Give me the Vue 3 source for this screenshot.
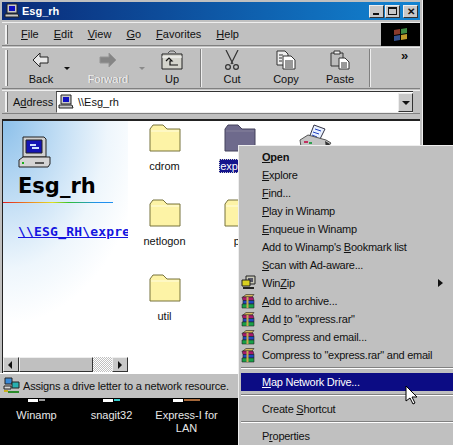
<script setup>
const menus = [['F','ile'],['E','dit'],['V','iew'],['G','o'],['F','avorites'],['H','elp']]
const folders = [
  { a: 'cdrom' }, { a: 'express', cls: 'sel' }, { a: '', printer: true },
  { a: 'netlogon' }, { a: 'pc' }, { a: '', blank: true },
  { a: 'util' }
]
const items = [
  { pre: '', key: 'O', post: 'pen', bold: true },
  { pre: '', key: 'E', post: 'xplore' },
  { pre: '', key: 'F', post: 'ind...' },
  { pre: '', key: 'P', post: 'lay in Winamp' },
  { pre: '', key: 'E', post: 'nqueue in Winamp' },
  { pre: "Add to Winamp's ", key: 'B', post: 'ookmark list' },
  { pre: '', key: 'S', post: 'can with Ad-aware...' },
  { pre: 'Win', key: 'Z', post: 'ip', icon: 'zip', arrow: true },
  { pre: '', key: 'A', post: 'dd to archive...', icon: 'rar' },
  { pre: 'Add ', key: 't', post: 'o "express.rar"', icon: 'rar' },
  { pre: 'Compress and email...', key: '', post: '', icon: 'rar' },
  { pre: 'Compress to "express.rar" and email', key: '', post: '', icon: 'rar' },
  { sep: true },
  { pre: '', key: 'M', post: 'ap Network Drive...', active: true },
  { sep: true },
  { pre: 'Create ', key: 'S', post: 'hortcut' },
  { sep: true },
  { pre: 'P', key: 'r', post: 'operties' }
]
const desktop = [
  { label: 'Winamp', tint: '#9a9a9a' },
  { label: 'snagit32', tint: '#35c9c9' },
  { label: 'Express-I for LAN', tint: '#a5683a' }
]
</script>

<template>
  <div class="screen">
    <div class="window">
      <header class="title">
        <svg class="title-icon" width="16" height="16" viewBox="0 0 16 16"><path d="M3 1h10v9H3z" fill="#c8c8c8" stroke="#222"/><path d="M5 3h6v5H5z" fill="#1010c0"/><path d="M1 11h13l1 3H1z" fill="#c8c8c8" stroke="#222"/></svg>
        <span class="title-text">Esg_rh</span>
        <div class="controls">
          <span class="ctl"><i class="min"></i></span>
          <span class="ctl"><i class="max"></i></span>
          <span class="ctl close">✕</span>
        </div>
      </header>

      <div class="band menu-band">
        <span class="grip"></span>
        <nav class="menus">
          <span v-for="m in menus" :key="m[1]" class="menu-name"><u>{{ m[0] }}</u>{{ m[1] }}</span>
        </nav>
        <div class="flag">
          <svg width="16" height="15" viewBox="0 0 16 15">
            <path d="M1 3l6-1v5l-6 1z" fill="#8a3a2c"/><path d="M8 2l6-1v5l-6 1z" fill="#3f8a44"/>
            <path d="M1 9l6-1v5l-6 1z" fill="#34508e"/><path d="M8 8l6-1v5l-6 1z" fill="#c09a2c"/>
          </svg>
        </div>
      </div>

      <div class="band tool-band">
        <span class="grip tall"></span>
        <div class="tool back">
          <svg width="18" height="20" viewBox="0 0 18 20"><path d="M1 10l7-7v4h8v6H8v4z" fill="#e8e8e8" stroke="#222"/></svg>
          <span>Back</span>
        </div>
        <span class="drop"></span>
        <div class="tool forward">
          <svg width="20" height="20" viewBox="0 0 20 20"><path d="M18 10l-7-7v4H2v6h9v4z" fill="#858585" stroke="#969696"/></svg>
          <span>Forward</span>
        </div>
        <span class="drop off"></span>
        <div class="tool up">
          <svg width="22" height="20" viewBox="0 0 22 20">
            <path d="M7 3l2-2h4l2 2" fill="none" stroke="#555"/>
            <path d="M1 4h20v15H1z" fill="#d4d4cc" stroke="#222"/>
            <path d="M1 7h20" stroke="#fff"/>
            <path d="M5 11l3-3 3 3H9v4h8" fill="none" stroke="#111" stroke-width="1.2"/>
          </svg>
          <span>Up</span>
        </div>
        <span class="divider"></span>
        <div class="tool cut">
          <svg width="16" height="20" viewBox="0 0 16 20"><path d="M2 0l7 14M14 0L7 14" stroke="#333" stroke-width="1.2" fill="none"/><circle cx="4" cy="17" r="2.4" fill="none" stroke="#333" stroke-width="1.2"/><circle cx="12" cy="17" r="2.4" fill="none" stroke="#333" stroke-width="1.2"/></svg>
          <span>Cut</span>
        </div>
        <div class="tool copy">
          <svg width="20" height="20" viewBox="0 0 20 20"><path d="M1 1h8l3 3v11H1z" fill="#eee" stroke="#333"/><path d="M7 6h8l4 4v9H7z" fill="#fff" stroke="#333"/><path d="M3 5h4M3 8h3M3 11h3M9 11h8M9 13h8M9 15h8M9 17h8" stroke="#333"/></svg>
          <span>Copy</span>
        </div>
        <div class="tool paste">
          <svg width="20" height="20" viewBox="0 0 20 20"><path d="M1 3h12v13H1z" fill="#bcbcbc" stroke="#333"/><path d="M4 1h6v3H4z" fill="#eee" stroke="#333"/><path d="M9 8h6l4 4v7H9z" fill="#fff" stroke="#333"/><path d="M11 13h6M11 15h6M11 17h6" stroke="#333"/></svg>
          <span>Paste</span>
        </div>
        <span class="divider end"></span>
        <span class="more">»</span>
      </div>

      <div class="band addr-band">
        <span class="grip short"></span>
        <span class="addr-label">A<u>d</u>dress</span>
        <div class="addr-box">
          <svg width="16" height="16" viewBox="0 0 16 16"><path d="M3 1h10v9H3z" fill="#c8c8c8" stroke="#222"/><path d="M5 3h6v5H5z" fill="#1010c0"/><path d="M1 11h13l1 3H1z" fill="#c8c8c8" stroke="#222"/></svg>
          <span class="addr-text">\\Esg_rh</span>
          <span class="combo"><i></i></span>
        </div>
      </div>

      <main class="body">
        <aside class="side">
          <div class="side-top">
            <svg class="big-pc" width="33" height="34" viewBox="0 0 33 34">
              <path d="M5 1h21l2 2v18H5z" fill="#d0d0d0" stroke="#222"/>
              <path d="M8 4h16v13H8z" fill="#1414b4" stroke="#222"/>
              <path d="M12 8h6v2h-6zM14 11h7v2h-7z" fill="#cfe0ff"/>
              <path d="M1 24l4-3h27v7l-2 3H1z" fill="#d4d4d4" stroke="#222"/>
              <path d="M17 27h9" stroke="#222" stroke-width="1.4"/>
              <path d="M4 27h2" stroke="#1ab01a" stroke-width="2"/>
            </svg>
            <h1>Esg_rh</h1>
          </div>
          <div class="rainbow"></div>
          <a class="unc">\\ESG_RH\expre</a>
          <div class="hscroll">
            <span class="sbtn"><i class="la"></i></span>
            <span class="thumb"></span>
            <span class="track"></span>
            <span class="sbtn"><i class="ra"></i></span>
          </div>
        </aside>

        <section class="files">
          <div v-for="(f, i) in folders" :key="i" class="file" :class="f.cls">
            <svg v-if="f.printer" width="34" height="28" viewBox="0 0 34 28">
              <path d="M16 1l11 4-6 12-10-3z" fill="#e8f0ff" stroke="#334"/>
              <path d="M17 5l6 2M15 8l6 2M14 11l5 2" stroke="#2040c0"/>
              <path d="M2 16l8-5 18 5 5 3-4 5-10 3-16-4z" fill="#c4c4c4" stroke="#555"/>
              <path d="M27 17l5 3-4 4z" fill="#333"/>
              <path d="M6 18h4" stroke="#c03060" stroke-width="2"/><path d="M11 19h3" stroke="#30a050" stroke-width="2"/>
            </svg>
            <svg v-else-if="!f.blank" width="32" height="28" viewBox="0 0 32 28">
              <path d="M1 5l3-4h10l4 4h13v22H1z" :fill="f.cls ? '#6e6a8c' : '#fdf3a6'" :stroke="f.cls ? '#45425c' : '#77723c'"/>
              <path d="M2 7h28" :stroke="f.cls ? '#86829c' : '#fffde0'"/>
            </svg>
            <span class="file-name">{{ f.a }}</span>
          </div>
        </section>
      </main>

      <footer class="status">
        <svg width="17" height="18" viewBox="0 0 17 18">
          <path d="M2 1h7v6H2z" fill="#3a8ad8" stroke="#222"/><path d="M9 5h7v6H9z" fill="#28b0b0" stroke="#222"/>
          <path d="M1 9h7v3H1z" fill="#d8d8d8" stroke="#222"/>
          <path d="M1 14h4" stroke="#c8b020" stroke-width="2"/><path d="M5 15h11" stroke="#2a8a2a" stroke-width="2"/>
        </svg>
        <span>Assigns a drive letter to a network resource.</span>
      </footer>
    </div>

    <div class="desktop">
      <div v-for="d in desktop" :key="d.label" class="dicon">
        <span class="dmark"><i></i><b :style="{ background: d.tint }"></b></span>
        <span class="dlabel">{{ d.label }}</span>
      </div>
    </div>

    <div class="ctx">
      <template v-for="(it, i) in items" :key="i">
        <div v-if="it.sep" class="ctx-sep"></div>
        <div v-else class="ctx-item" :class="{ bold: it.bold, active: it.active }">
          <span class="ctx-icon">
            <svg v-if="it.icon === 'rar'" width="15" height="15" viewBox="0 0 15 15">
              <path d="M2 3l3-2.500h8L11 3z" fill="#d8b860" stroke="#222" stroke-width=".6"/>
              <path d="M1 3h11l1 3.500H2z" fill="#a8186c" stroke="#222" stroke-width=".6"/>
              <path d="M2 6.500h11v3.500H2z" fill="#1c48c0" stroke="#222" stroke-width=".6"/>
              <path d="M1 10h12v4H1z" fill="#18a048" stroke="#222" stroke-width=".6"/>
              <path d="M5.500 3h2v11h-2z" fill="#c8a850"/>
            </svg>
            <svg v-else-if="it.icon === 'zip'" width="15" height="16" viewBox="0 0 15 16">
              <path d="M5 1h9v8H5z" fill="#c8c8b8" stroke="#222"/>
              <path d="M7 3h5v4H7z" fill="#556"/>
              <path d="M1 5h8v6H1z" fill="#d8d020" stroke="#222"/>
              <path d="M2 13h11" stroke="#222" stroke-width="2"/>
            </svg>
          </span>
          <span class="ctx-label">{{ it.pre }}<u v-if="it.key">{{ it.key }}</u>{{ it.post }}</span>
          <i v-if="it.arrow" class="sub"></i>
        </div>
      </template>
      <svg class="cursor" width="13" height="20" viewBox="0 0 13 20"><path d="M1 1v15l4-3 3 6 2-1-3-6h5z" fill="#fff" stroke="#000"/></svg>
    </div>
  </div>
</template>

<style scoped>
.screen {
  position: relative;
  width: 453px;
  height: 445px;
  overflow: hidden;
  background: #000;
  font: 11px/14px "Liberation Sans", Arial, sans-serif;
  color: #111;
}
.window {
  display: flex;
  flex-direction: column;
  width: 423px;
  height: 398px;
  box-sizing: border-box;
  padding: 2px 2px 0;
  background: #c0c0c0;
  border-right: 1px solid #eee;
}
.title {
  display: flex;
  align-items: center;
  height: 18px;
  flex: none;
  padding-left: 2px;
  background: linear-gradient(90deg, #0a2a78, #1284d2);
}
.title-icon { flex: none; }
.title-text {
  margin-left: 2px;
  color: #fff;
  font-weight: 700;
  font-size: 11px;
}
.controls { display: flex; margin-left: auto; margin-right: 2px; }
.ctl {
  position: relative;
  width: 15px;
  height: 13px;
  margin-left: 1px;
  background: #c8c8c8;
  border: 1px solid;
  border-color: #eee #333 #333 #eee;
  box-sizing: border-box;
  text-align: center;
  font-size: 10px;
  line-height: 11px;
  font-weight: 700;
}
.ctl.close { margin-left: 3px; }
.min { position: absolute; left: 3px; bottom: 2px; width: 6px; height: 2px; background: #111; }
.max { position: absolute; left: 2px; top: 1px; width: 9px; height: 8px; border: 1px solid #111; border-top-width: 2px; box-sizing: border-box; }
.band {
  display: flex;
  align-items: center;
  flex: none;
  border-top: 1px solid #eee;
  border-bottom: 1px solid #808080;
  box-sizing: border-box;
}
.grip {
  flex: none;
  width: 2px;
  height: 19px;
  margin-left: 3px;
  background: #f0f0f0;
  border-right: 1px solid #707070;
}
.grip.tall { height: 36px; }
.menu-band { height: 24px; margin-top: 2px; }
.menus { display: flex; }
.menu-name { margin-right: 15px; }
.menus .menu-name:first-child { margin-left: 13px; }
.flag {
  display: flex;
  align-items: center;
  justify-content: center;
  width: 39px;
  height: 23px;
  margin-left: auto;
  background: #000;
}
.tool-band { height: 42px; margin-top: 1px; }
.tool {
  display: flex;
  flex-direction: column;
  align-items: center;
  justify-content: space-between;
  flex: none;
  height: 36px;
}
.tool svg { display: block; }
.back { width: 40px; margin-left: 13px; }
.forward { width: 56px; margin-left: 10px; color: #f0f0f0; text-shadow: 1px 0 0 #8c8c8c; }
.up { width: 36px; margin-left: 9px; }
.cut { width: 36px; margin-left: 12px; }
.copy { width: 40px; margin-left: 16px; }
.paste { width: 42px; margin-left: 13px; }
.drop {
  flex: none;
  margin: 0 0 0 3px;
  width: 0;
  height: 0;
  border: 3px solid transparent;
  border-top: 3px solid #111;
  border-bottom: 0;
}
.drop.off { border-top-color: #8a8a8a; }
.divider {
  flex: none;
  width: 1px;
  height: 38px;
  margin-left: 10px;
  background: #808080;
  border-right: 1px solid #eee;
}
.divider.end { margin-left: 8px; }
.more {
  margin: -24px 0 0 30px;
  font-weight: 700;
  font-size: 13px;
}
.addr-band { height: 24px; margin-top: 1px; }
.grip.short { height: 20px; }
.addr-label { flex: none; width: 43px; margin-left: 5px; }
.addr-box {
  display: flex;
  align-items: center;
  flex: 1;
  height: 22px;
  margin: 0 7px 0 0;
  padding-left: 1px;
  background: #fff;
  box-sizing: border-box;
  border-top: 1px solid #333;
  border-left: 1px solid #555;
  border-bottom: 1px solid #eee;
}
.addr-text { margin-left: 4px; }
.combo {
  position: relative;
  width: 15px;
  height: 19px;
  margin-left: auto;
  background: #c8c8c8;
  border: 1px solid;
  border-color: #eee #333 #333 #eee;
  box-sizing: border-box;
}
.combo i {
  position: absolute;
  left: 3px;
  top: 7px;
  border: 4px solid transparent;
  border-top: 4px solid #111;
  border-bottom: 0;
}
.body {
  display: flex;
  flex: 1;
  min-height: 0;
  margin-top: 5px;
  background: #fff;
  border-top: 2px solid #222;
  border-left: 1px solid #222;
}
.side {
  display: flex;
  flex-direction: column;
  flex: none;
  width: 125px;
  overflow: hidden;
  background:
    radial-gradient(ellipse 135% 100% at 0% 0%, #8cc0ea 0%, #cfe5f7 42%, #eef6fc 62%, rgba(255,255,255,0) 85%) no-repeat,
    #fff;
  background-size: 125px 240px;
}
.side-top { padding: 15px 0 0 15px; }
.big-pc { display: block; }
h1 {
  margin: 3px 0 0;
  font: 700 21px/26px "DejaVu Sans", sans-serif;
  color: #000;
}
.rainbow {
  flex: none;
  width: 110px;
  height: 1px;
  margin-top: 3px;
  background: linear-gradient(90deg, #e02020, #f0a020 30%, #e0e020 45%, #30c030 60%, #2090f0 85%);
}
.unc {
  margin: 21px 0 0 15px;
  white-space: nowrap;
  color: #1414e0;
  text-decoration: underline;
  font: 700 13px/16px "DejaVu Sans Mono", monospace;
  letter-spacing: .2px;
}
.hscroll {
  display: flex;
  flex: none;
  height: 15px;
  margin-top: auto;
  margin-bottom: 1px;
}
.sbtn {
  position: relative;
  flex: none;
  width: 16px;
  background: #c8c8c8;
  border: 1px solid;
  border-color: #eee #333 #333 #eee;
  box-sizing: border-box;
}
.sbtn i { position: absolute; top: 3px; border: 4px solid transparent; }
.la { left: 4px; border-right-color: #111 !important; border-left-width: 0 !important; }
.ra { left: 5px; border-left-color: #111 !important; border-right-width: 0 !important; }
.thumb {
  flex: none;
  width: 74px;
  background: #c0c0c0;
  border: 1px solid;
  border-color: #eee #333 #333 #eee;
  box-sizing: border-box;
}
.track {
  flex: 1;
  background: repeating-conic-gradient(#c0c0c0 0 25%, #fff 0 50%) 0 0 / 2px 2px;
}
.files {
  display: grid;
  grid-template-columns: 75px 75px 75px;
  grid-auto-rows: 75px;
  padding-top: 3px;
  margin-left: -1px;
}
.file {
  display: flex;
  flex-direction: column;
  align-items: center;
  width: 75px;
}
.file svg { flex: none; display: block; }
.file-name {
  margin-top: 7px;
  padding: 0 1px;
}
.sel .file-name { background: #14148c; color: #fff; outline: 1px dotted #ccc; outline-offset: -1px; }
.status {
  display: flex;
  align-items: center;
  flex: none;
  height: 25px;
  margin: 0 -2px;
  padding-left: 3px;
  background: #c0c0c0;
  border-top: 1px solid #fff;
  box-sizing: border-box;
}
.status span { margin-left: 3px; white-space: nowrap; letter-spacing: -.18px; }
.desktop {
  display: flex;
  margin-left: -1px;
  color: #e8e8e8;
  text-align: center;
}
.dicon {
  display: flex;
  flex-direction: column;
  align-items: center;
  flex: none;
  width: 75px;
}
.dmark { display: flex; align-items: center; height: 4px; }
.dmark i { width: 10px; height: 3px; background: #fff; }
.dmark b { width: 6px; height: 2px; margin-left: 1px; }
.dicon:last-child .dmark b { width: 16px; }
.dlabel { width: 70px; margin-top: 7px; line-height: 13px; }
.ctx {
  position: absolute;
  left: 238px;
  top: 145px;
  width: 215px;
  height: 300px;
  box-sizing: border-box;
  padding: 2px 0 0 2px;
  background: #c0c0c0;
  border-top: 1px solid #eee;
  border-left: 1px solid #eee;
}
.ctx-item {
  display: flex;
  align-items: center;
  height: 18px;
  padding-right: 10px;
  white-space: nowrap;
}
.ctx-item.bold { font-weight: 700; }
.ctx-item.active { background: #0c0c84; color: #fff; }
.ctx-icon { display: flex; flex: none; width: 21px; }
.ctx-label { flex: none; letter-spacing: -.25px; }
.sub {
  margin-left: auto;
  border: 4px solid transparent;
  border-left: 5px solid #111;
  border-right: 0;
}
.ctx-sep {
  height: 9px;
  position: relative;
}
.ctx-sep::after {
  content: "";
  position: absolute;
  left: 0;
  right: 0;
  top: 3px;
  height: 1px;
  background: #808080;
  border-bottom: 1px solid #fff;
}
.cursor { position: absolute; left: 166px; top: 239px; }
</style>
